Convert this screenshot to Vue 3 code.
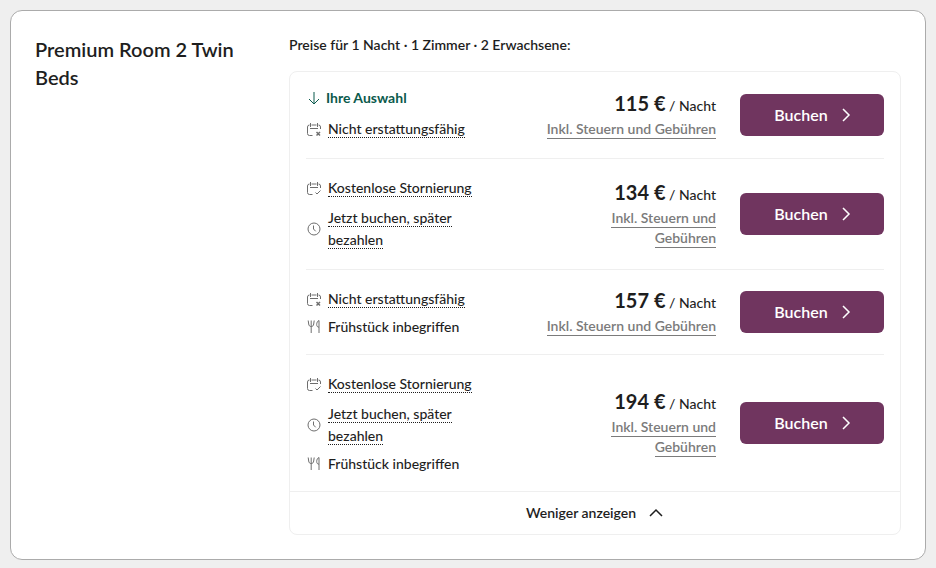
<script setup>
const offers = [
  { price: 115, selected: true, perks: [{ icon: 'no-refund', text: 'Nicht erstattungsfähig', hint: true }] },
  {
    price: 134,
    narrow: true,
    perks: [
      { icon: 'refund', text: 'Kostenlose Stornierung', hint: true },
      { icon: 'clock', text: 'Jetzt buchen, später bezahlen', hint: true },
    ],
  },
  {
    price: 157,
    perks: [
      { icon: 'no-refund', text: 'Nicht erstattungsfähig', hint: true },
      { icon: 'meal', text: 'Frühstück inbegriffen' },
    ],
  },
  {
    price: 194,
    narrow: true,
    perks: [
      { icon: 'refund', text: 'Kostenlose Stornierung', hint: true },
      { icon: 'clock', text: 'Jetzt buchen, später bezahlen', hint: true },
      { icon: 'meal', text: 'Frühstück inbegriffen' },
    ],
  },
]
</script>

<template>
  <main class="page">
    <article class="card">
      <h2 class="room">Premium Room 2 Twin Beds</h2>
      <section class="rates">
        <h3 class="caption">Preise für 1 Nacht · 1 Zimmer · 2 Erwachsene:</h3>
        <div class="box">
          <ul class="offers">
            <li v-for="offer in offers" :key="offer.price" class="offer">
              <div class="details">
                <p v-if="offer.selected" class="selected">
                  <svg class="arrow" viewBox="0 0 16 16" aria-hidden="true"><path d="M8 2v12M3 9l5 5 5-5" /></svg>
                  Ihre Auswahl
                </p>
                <ul class="perks">
                  <li v-for="perk in offer.perks" :key="perk.text" class="perk" :class="{ hinted: perk.hint }">
                    <svg class="icon" viewBox="0 0 16 16" aria-hidden="true">
                      <template v-if="perk.icon === 'clock'">
                        <circle cx="8" cy="8" r="6" />
                        <path d="M7.5 4.5V8l2.2 2.3" />
                      </template>
                      <template v-else-if="perk.icon === 'meal'">
                        <path d="M2.2 1.5l.5 3.500c.2 1.700 1 2.500 2.500 2.500s2.300-.8 2.500-2.500l.5-3.500M5.200 1.500V14" />
                        <path d="M13 14V1.500c-1.500.6-2.300 2.200-2.300 4 0 1.700.8 2.700 2.300 2.700" />
                      </template>
                      <template v-else>
                        <path d="M6.500 14.500H3.500a2 2 0 0 1-2-2V6a2 2 0 0 1 2-2M5.500 4h5M12.500 4a2 2 0 0 1 2 2V8M4.500 2v4M11.500 2v4M4 7.500h8" />
                        <path v-if="perk.icon === 'refund'" d="M9.500 12.500l1.500 1.500 3.500-3.500" />
                        <path v-else class="cross" d="M10.500 11l3.500 3.500M14 11L10.500 14.500" />
                      </template>
                    </svg>
                    <span><a v-if="perk.hint" class="hint" href="#">{{ perk.text }}</a><template v-else>{{ perk.text }}</template></span>
                  </li>
                </ul>
              </div>
              <div class="price" :class="{ narrow: offer.narrow }">
                <p class="amount"><strong>{{ offer.price }} €</strong> / Nacht</p>
                <p class="tax"><a href="#">Inkl. Steuern und Gebühren</a></p>
              </div>
              <button class="book" type="button">
                Buchen
                <svg class="chevron" viewBox="0 0 16 16" aria-hidden="true"><path d="M5 2l6 6-6 6" /></svg>
              </button>
            </li>
          </ul>
          <button class="toggle" type="button">
            Weniger anzeigen
            <svg class="chevron" viewBox="0 0 16 16" aria-hidden="true"><path d="M2 11l6-6 6 6" /></svg>
          </button>
        </div>
      </section>
    </article>
  </main>
</template>

<style>
body {
  background: #efefef;
}
</style>

<style scoped>
.page {
  padding: 10px;
  font-family: Lato, "Liberation Sans", sans-serif;
  font-size: 14px;
  line-height: 22px;
  color: #1e1e1e;
}
.page * {
  box-sizing: border-box;
}
h2, h3, p, ul {
  margin: 0;
  padding: 0;
  list-style: none;
}
button {
  border: 0;
  font: inherit;
  color: inherit;
  cursor: pointer;
}
svg {
  flex: none;
  width: 16px;
  height: 16px;
  fill: none;
  stroke: currentColor;
}
.card {
  display: grid;
  grid-template-columns: 230px 1fr;
  gap: 24px;
  padding: 24px;
  background: #fff;
  border: 1px solid #ababab;
  border-radius: 12px;
}
.room {
  font-size: 20px;
  line-height: 28px;
  font-weight: 600;
}
.caption {
  margin-bottom: 16px;
  font-size: 14px;
  line-height: 20px;
  font-weight: 600;
}
.box {
  border: 1px solid #efefef;
  border-radius: 8px;
}
.offers {
  padding: 0 16px;
}
.offer {
  display: flex;
  align-items: center;
  gap: 24px;
  padding: 16px 0;
}
.offer + .offer {
  border-top: 1px solid #efefef;
}
.details {
  width: 176px;
}
.selected {
  display: flex;
  align-items: center;
  gap: 4px;
  margin-bottom: 8px;
  line-height: 20px;
  font-weight: 700;
  color: #0b5a4c;
}
.perks {
  display: grid;
  gap: 4px;
}
.perk {
  display: flex;
  align-items: center;
  gap: 6px;
  font-weight: 500;
}
.perk.hinted {
  padding: 2px 0;
}
.icon {
  color: #6e6e6e;
}
.cross {
  stroke-width: 1.5;
}
.hint {
  color: inherit;
  text-decoration: none;
  border-bottom: 1px dotted #1e1e1e;
}
.price {
  flex: 1;
  display: flex;
  flex-direction: column;
  align-items: flex-end;
  padding-bottom: 2px;
  text-align: right;
}
.amount {
  line-height: 26px;
  font-weight: 500;
}
.amount strong {
  font-size: 20px;
  font-weight: 700;
}
.tax {
  line-height: 20px;
  font-weight: 600;
}
.narrow .tax {
  max-width: 136px;
}
.tax a {
  padding-bottom: 1px;
  color: #7b7b7b;
  text-decoration: none;
  border-bottom: 1px solid #7b7b7b;
}
.book {
  display: flex;
  align-items: center;
  justify-content: center;
  gap: 10px;
  width: 144px;
  height: 42px;
  padding: 0 6px 0 10px;
  border-radius: 6px;
  background: #70355f;
  color: #fff;
  font-size: 16px;
  font-weight: 600;
}
.toggle {
  display: flex;
  align-items: center;
  justify-content: center;
  gap: 12px;
  width: 100%;
  padding: 10px 16px;
  border-top: 1px solid #efefef;
  border-radius: 0 0 8px 8px;
  background: none;
  font-weight: 600;
}
.chevron {
  stroke-width: 1.5;
}
</style>
